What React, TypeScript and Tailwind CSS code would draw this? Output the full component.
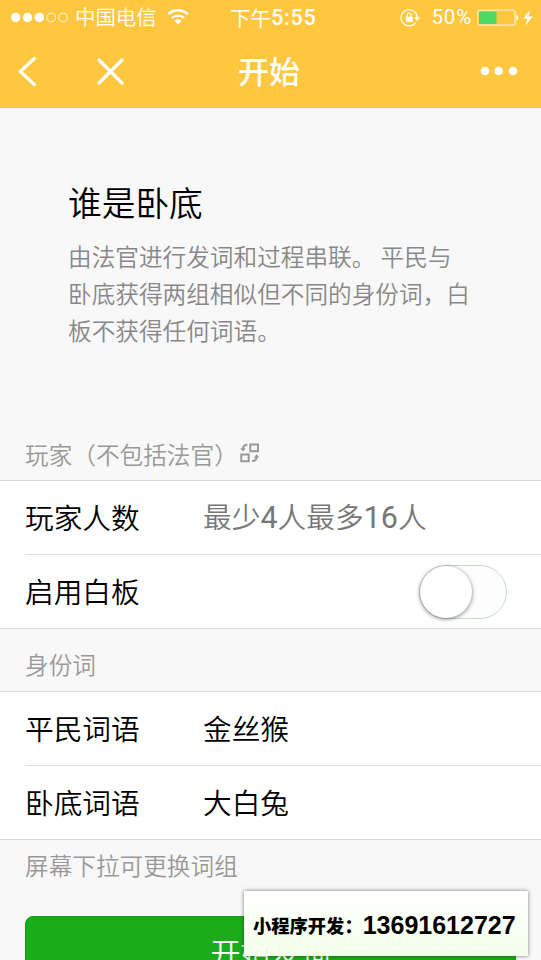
import type { ReactNode } from "react";

function StatusBar() {
  return (
    <div className="relative flex h-[35px] items-center text-white">
      <div className="flex items-center pl-[11px]">
        <svg className="h-[12px] w-[58px]" viewBox="0 0 58 12" fill="none">
          <circle cx="4.7" cy="5.5" r="4.7" fill="currentColor" />
          <circle cx="16.6" cy="5.5" r="4.7" fill="currentColor" />
          <circle cx="28.3" cy="5.5" r="4.7" fill="currentColor" />
          <circle cx="40.2" cy="5.5" r="4.4" stroke="currentColor" strokeWidth="0.9" />
          <circle cx="52" cy="5.5" r="4.4" stroke="currentColor" strokeWidth="0.9" />
        </svg>
        <span className="ml-[6px] pb-[2px] text-[20.4px] leading-none font-[350]">中国电信</span>
        <svg className="mb-[1px] ml-[10px] h-[16px] w-[22px]" viewBox="0 0 22 16" fill="none">
          <path d="M1.2 5.2a14.2 14.2 0 0 1 19.6 0" stroke="currentColor" strokeWidth="2.4" />
          <path d="M4.9 9a9 9 0 0 1 12.2 0" stroke="currentColor" strokeWidth="2.3" />
          <path d="M7.5 11.7a5.2 5.2 0 0 1 7 0L11 15.4z" fill="currentColor" />
        </svg>
      </div>

      <div className="absolute left-[230px] flex items-center leading-none">
        <span className="pb-[1px] text-[20.5px]">下午</span>
        <span className="font-['Roboto'] text-[21.5px] font-medium tracking-[0.8px]">5:55</span>
      </div>

      <div className="ml-auto flex items-center pr-[8px]">
        <svg className="h-[18px] w-[20px]" viewBox="0 0 20 18" fill="none">
          <path
            d="M15.6 13.6A8.1 8.1 0 1 1 17.2 9"
            stroke="currentColor"
            strokeWidth="1.2"
          />
          <path d="M14 8.2h6l-3 3.8z" fill="currentColor" />
          <rect x="5.7" y="7.7" width="7" height="5.4" rx="0.6" fill="currentColor" />
          <path d="M7.2 8V6a2 2 0 0 1 4 0v2" stroke="currentColor" strokeWidth="1.2" />
        </svg>
        <span className="ml-[12px] font-['Roboto'] text-[20.5px] leading-none tracking-[0.8px]">50%</span>
        <svg className="ml-[5px] h-[18px] w-[56px]" viewBox="0 0 56 18" fill="none">
          <rect x="0.7" y="1.2" width="37.4" height="15" rx="2.4" stroke="#ffedc4" strokeWidth="1.3" />
          <rect x="2" y="2.5" width="17.5" height="12.4" rx="1" fill="#4cd964" />
          <path d="M39.4 5.8c2.6.6 2.6 5.4 0 6z" fill="currentColor" />
          <path d="M53 .8 46.5 9.6h3.8L48.4 16.8 55.6 7.4h-4z" fill="currentColor" />
        </svg>
      </div>
    </div>
  );
}

function NavBar() {
  return (
    <div className="relative flex h-[73px] items-center text-white">
      <svg className="ml-[18px] h-[30px] w-[18px]" viewBox="0 0 18 30" fill="none">
        <path d="M16.3 1.5 2.3 14.5l14 13" stroke="currentColor" strokeWidth="3.2" strokeLinecap="round" />
      </svg>
      <svg className="ml-[61px] h-[27px] w-[27px]" viewBox="0 0 27 27" fill="none">
        <path d="m2 2 23 23M25 2 2 25" stroke="currentColor" strokeWidth="3.2" strokeLinecap="round" />
      </svg>
      <h1 className="absolute left-[238px] pb-[4px] text-[31px] leading-none font-medium">开始</h1>
      <svg className="mr-[23px] mb-[2px] ml-auto h-[10px] w-[38px]" viewBox="0 0 38 10" fill="currentColor">
        <circle cx="5" cy="5" r="4.3" />
        <circle cx="18.6" cy="5" r="4.3" />
        <circle cx="33" cy="5" r="4.3" />
      </svg>
    </div>
  );
}

function SwapIcon() {
  return (
    <svg className="mb-[3px] ml-[2px] h-[20px] w-[20px]" viewBox="0 0 20 20" fill="none" stroke="currentColor" strokeWidth="2">
      <rect x="10.3" y="1.5" width="7.7" height="6.7" />
      <rect x="1.3" y="11.5" width="7.4" height="6.8" />
      <path d="M7.3 1.8C4.5 1.8 3 3.2 3 6.5" />
      <path d="M.2 5.3h5.6L3 8.4z" fill="currentColor" stroke="none" />
      <path d="M12 18c3 0 4.6-1.5 4.6-4.6" />
      <path d="M13.8 14.5h5.6l-2.8-3.3z" fill="currentColor" stroke="none" />
    </svg>
  );
}

function Row({ label, children }: { label: string; children: ReactNode }) {
  return (
    <div className="ml-[25px] flex h-[74px] items-center border-[#dedede] text-[28.7px] leading-none font-[350] not-last:border-b">
      <span className="w-[178px] pb-px">{label}</span>
      {children}
    </div>
  );
}

export default function App() {
  return (
    <div className="relative h-[960px] w-[541px] overflow-hidden bg-[#f8f8f8] font-['Noto_Sans_CJK_SC',sans-serif] text-black">
      <header className="h-[108px] bg-[#ffc640]">
        <StatusBar />
        <NavBar />
      </header>

      <section className="h-[327px] px-[68px] pt-[71px]">
        <h2 className="text-[33.7px] leading-[46px] font-[350]">谁是卧底</h2>
        <p className="mt-[13px] text-[23.65px] leading-[37px] font-[350] whitespace-nowrap text-[#888]">
          由法官进行发词和过程串联。 平民与
          <br />
          卧底获得两组相似但不同的身份词，白
          <br />
          板不获得任何词语。
        </p>
      </section>

      <div className="flex h-[45px] items-center pb-[6px] text-[#999]">
        <span className="pl-[25px] text-[23.65px] leading-none font-[350]">玩家（不包括法官）</span>
        <SwapIcon />
      </div>
      <div className="h-[149px] border-y border-[#d9d9d9] bg-white">
        <Row label="玩家人数">
          <span className="text-[#777]">
            最少<span className="font-['Roboto'] text-[30.5px] font-normal">4</span>人最多
            <span className="font-['Roboto'] text-[30.5px] font-normal">16</span>人
          </span>
        </Row>
        <Row label="启用白板">
          <div className="mr-[34px] ml-auto h-[54px] w-[88px] rounded-full border border-[#c6dac6] bg-[#fdfdfd]">
            <div className="h-[52px] w-[52px] rounded-full bg-white shadow-[0_1px_4px_rgba(0,0,0,0.5)]" />
          </div>
        </Row>
      </div>

      <div className="flex h-[62px] items-center pt-[9px] pl-[25px] text-[23.65px] leading-none font-[350] text-[#999]">
        身份词
      </div>
      <div className="h-[149px] border-y border-[#d9d9d9] bg-white">
        <Row label="平民词语">
          <span className="pb-px">金丝猴</span>
        </Row>
        <Row label="卧底词语">
          <span className="pb-px">大白兔</span>
        </Row>
      </div>
      <p className="pt-[7px] pl-[25px] text-[23.65px] leading-[37px] font-[350] text-[#999]">屏幕下拉可更换词组</p>

      <button className="mx-[25px] mt-[32px] flex h-[74px] w-[491px] items-center justify-center rounded-[8px] border border-[#189a18] bg-[#1aad19] pb-[4px] text-[30px] leading-none font-[350] text-white">
        开始发词
      </button>

      <div className="absolute top-[891px] left-[244px] flex h-[65px] w-[284px] items-center bg-linear-to-b from-white to-[#f3ffea] pt-[4px] pl-[9px] leading-none shadow-[0_0_4px_rgba(0,0,0,0.5)]">
        <span className="text-[18.3px] font-black">小程序开发：</span>
        <span className="font-['Liberation_Sans'] text-[25px] font-bold">13691612727</span>
      </div>
    </div>
  );
}
